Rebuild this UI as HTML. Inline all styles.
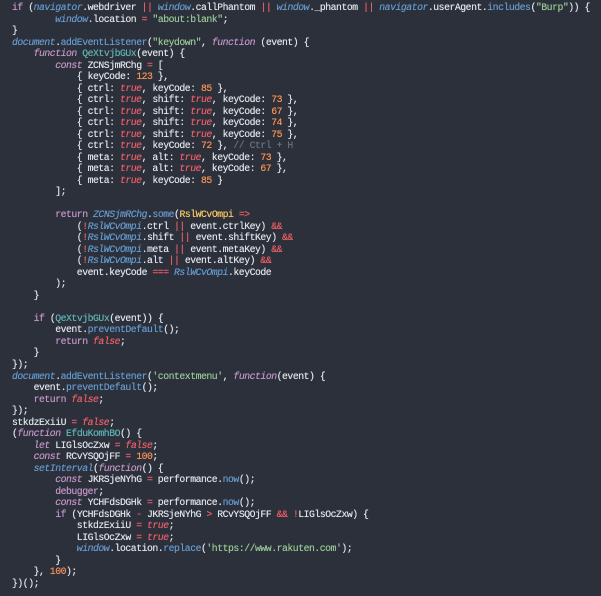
<!DOCTYPE html>
<html><head><meta charset="utf-8"><style>
html,body{margin:0;padding:0;background:#2b303b;width:601px;height:596px;overflow:hidden}
pre{margin:0;position:absolute;left:12px;top:2px;font-family:"Liberation Mono",monospace;font-size:9.8px;line-height:11.52px;color:#e0e4ea;letter-spacing:-0.48px;text-shadow:0 0 0.4px currentColor}
.k{color:#c594c5;font-style:italic}
.kw{color:#c594c5}
.g{color:#6699cc;font-style:italic}
.m{color:#6699cc}
.o{color:#ec5f67}
.s{color:#99c794}
.n{color:#f99157}
.b{color:#ec5f67;font-style:italic}
.f{color:#5fb3b3}
.p{color:#fac863}
.c{color:#65737e}
</style></head><body><pre><span class="kw">if</span> (<span class="g">navigator</span>.webdriver <span class="o">||</span> <span class="g">window</span>.callPhantom <span class="o">||</span> <span class="g">window</span>._phantom <span class="o">||</span> <span class="g">navigator</span>.userAgent.<span class="m">includes</span>(<span class="s">"Burp"</span>)) {
        <span class="g">window</span>.location <span class="o">=</span> <span class="s">"about:blank"</span>;
}
<span class="g">document</span>.<span class="m">addEventListener</span>(<span class="s">"keydown"</span>, <span class="k">function</span> (event) {
    <span class="k">function</span> <span class="f">QeXtvjbGUx</span>(event) {
        <span class="k">const</span> ZCNSjmRChg <span class="o">=</span> [
            { keyCode: <span class="n">123</span> },
            { ctrl: <span class="b">true</span>, keyCode: <span class="n">85</span> },
            { ctrl: <span class="b">true</span>, shift: <span class="b">true</span>, keyCode: <span class="n">73</span> },
            { ctrl: <span class="b">true</span>, shift: <span class="b">true</span>, keyCode: <span class="n">67</span> },
            { ctrl: <span class="b">true</span>, shift: <span class="b">true</span>, keyCode: <span class="n">74</span> },
            { ctrl: <span class="b">true</span>, shift: <span class="b">true</span>, keyCode: <span class="n">75</span> },
            { ctrl: <span class="b">true</span>, keyCode: <span class="n">72</span> }, <span class="c">// Ctrl + H</span>
            { meta: <span class="b">true</span>, alt: <span class="b">true</span>, keyCode: <span class="n">73</span> },
            { meta: <span class="b">true</span>, alt: <span class="b">true</span>, keyCode: <span class="n">67</span> },
            { meta: <span class="b">true</span>, keyCode: <span class="n">85</span> }
        ];

        <span class="kw">return</span> <span class="g">ZCNSjmRChg</span>.<span class="m">some</span>(<span class="p">RslWCvOmpi</span> <span class="o">=&gt;</span>
            (<span class="o">!</span><span class="g">RslWCvOmpi</span>.ctrl <span class="o">||</span> event.ctrlKey) <span class="o">&amp;&amp;</span>
            (<span class="o">!</span><span class="g">RslWCvOmpi</span>.shift <span class="o">||</span> event.shiftKey) <span class="o">&amp;&amp;</span>
            (<span class="o">!</span><span class="g">RslWCvOmpi</span>.meta <span class="o">||</span> event.metaKey) <span class="o">&amp;&amp;</span>
            (<span class="o">!</span><span class="g">RslWCvOmpi</span>.alt <span class="o">||</span> event.altKey) <span class="o">&amp;&amp;</span>
            event.keyCode <span class="o">===</span> <span class="g">RslWCvOmpi</span>.keyCode
        );
    }

    <span class="kw">if</span> (<span class="f">QeXtvjbGUx</span>(event)) {
        event.<span class="m">preventDefault</span>();
        <span class="kw">return</span> <span class="b">false</span>;
    }
});
<span class="g">document</span>.<span class="m">addEventListener</span>(<span class="s">'contextmenu'</span>, <span class="k">function</span>(event) {
    event.<span class="m">preventDefault</span>();
    <span class="kw">return</span> <span class="b">false</span>;
});
stkdzExiiU <span class="o">=</span> <span class="b">false</span>;
(<span class="k">function</span> <span class="f">EfduKomhBO</span>() {
    <span class="k">let</span> LIGlsOcZxw <span class="o">=</span> <span class="b">false</span>;
    <span class="k">const</span> RCvYSQOjFF <span class="o">=</span> <span class="n">100</span>;
    <span class="g">setInterval</span>(<span class="k">function</span>() {
        <span class="k">const</span> JKRSjeNYhG <span class="o">=</span> performance.<span class="m">now</span>();
        <span class="kw">debugger</span>;
        <span class="k">const</span> YCHFdsDGHk <span class="o">=</span> performance.<span class="m">now</span>();
        <span class="kw">if</span> (YCHFdsDGHk <span class="o">-</span> JKRSjeNYhG <span class="o">&gt;</span> RCvYSQOjFF <span class="o">&amp;&amp;</span> <span class="o">!</span>LIGlsOcZxw) {
            stkdzExiiU <span class="o">=</span> <span class="b">true</span>;
            LIGlsOcZxw <span class="o">=</span> <span class="b">true</span>;
            <span class="g">window</span>.location.<span class="m">replace</span>(<span class="s">'https://www.rakuten.com'</span>);
        }
    }, <span class="n">100</span>);
})();</pre></body></html>
